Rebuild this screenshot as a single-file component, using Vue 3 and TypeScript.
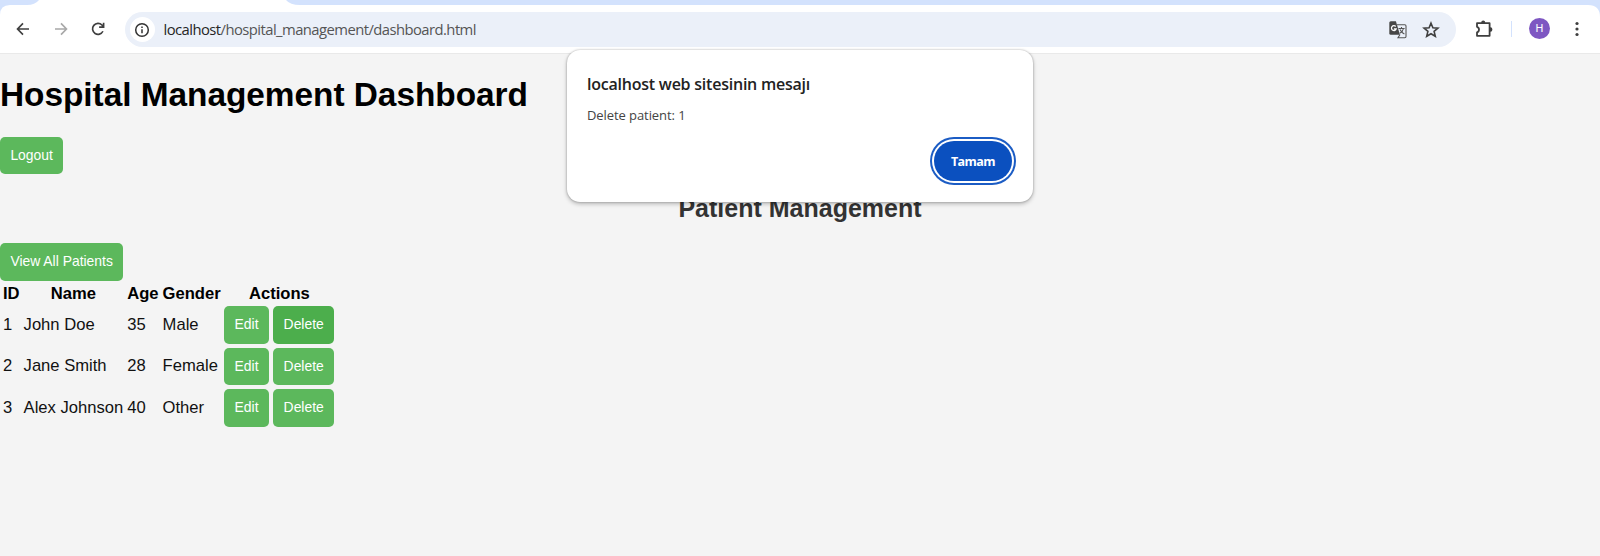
<script setup lang="ts">
interface Patient { id: number; name: string; age: number; gender: string }
const patients: Patient[] = [
  { id: 1, name: 'John Doe', age: 35, gender: 'Male' },
  { id: 2, name: 'Jane Smith', age: 28, gender: 'Female' },
  { id: 3, name: 'Alex Johnson', age: 40, gender: 'Other' },
]
const activeRow = 1
</script>

<template>
  <div class="window">
    <div class="tabstrip">
      <svg width="1600" height="20" viewBox="0 0 1600 20">
        <path d="M0 0H39Q35 5 27 5H10Q0 5 0 15Z" fill="#d3e2fd" />
        <path d="M286 0Q290 5 300 5H1588Q1600 5 1600 17V0Z" fill="#d3e2fd" />
      </svg>
    </div>
    <div class="toolbar">
      <svg class="nav" viewBox="0 0 24 24"><path d="M20 12H5M12 4.5L4.700 12l7.300 7.500" /></svg>
      <svg class="nav muted" viewBox="0 0 24 24"><path d="M4 12H19M12 4.5l7.300 7.500-7.300 7.500" /></svg>
      <svg class="nav" viewBox="0 0 24 24"><path d="M18.6 15a7.300 7.300 0 1 1-1.300-8.300l2 2.500M19.500 3.500v6h-6" /></svg>
      <div class="omnibox">
        <span class="info"><svg viewBox="0 0 16 16"><circle cx="8" cy="8" r="6.3" /><path d="M8 7.2v4M8 4.4v1.7" /></svg></span>
        <span class="url"><span class="host">localhost</span>/hospital_management/dashboard.html</span>
        <svg class="translate" viewBox="0 0 18 18">
          <path d="M8 3.8H15.8Q17 3.8 17 5V15.6Q17 16.8 15.8 16.8H9L11 13.5M9.5 7.5H15.6M12.5 6V7.5M14.5 7.5Q13.7 11 10.7 12.3M11 8.5Q12.5 11.5 15.4 13" fill="none" stroke="#555" stroke-width="1.1" />
          <path d="M1.800.3H6.900L10.900 13.700H1.800Q.3 13.700.3 12.200V1.800Q.3.3 1.800.3Z" fill="#474747" />
          <path d="M6.700 5.500A2.400 2.400 0 1 0 7.200 7.800H4.900" fill="none" stroke="#fff" stroke-width="1.3" />
        </svg>
        <svg class="star" viewBox="0 0 18 18"><path d="M9 2.200l1.900 4.600 5 .4-3.800 3.200 1.200 4.900L9 12.700l-4.300 2.600 1.200-4.900L2.100 7.200l5-.4z" /></svg>
      </div>
      <svg class="puzzle" viewBox="0 0 20 20">
        <path d="M3 4.200H15.600V16.800H3V13.400Q5 12.900 5 10.600T3 7.800Z" fill="none" stroke="#3f3f3f" stroke-width="1.8" stroke-linejoin="round" />
        <path d="M7.200 4V3.600a2 2 0 0 1 4 0V4ZM15.800 8.300h.6a2 2.200 0 0 1 0 4.400H15.800Z" fill="#3f3f3f" />
      </svg>
      <span class="divider"></span>
      <span class="avatar">H</span>
      <svg class="dots" viewBox="0 0 4 16"><circle cx="2" cy="2.500" r="1.6" /><circle cx="2" cy="8" r="1.6" /><circle cx="2" cy="13.500" r="1.6" /></svg>
    </div>

    <main class="page">
      <h1>Hospital Management Dashboard</h1>
      <button>Logout</button>
      <h2>Patient Management</h2>
      <button>View All Patients</button>
      <table>
        <thead><tr><th>ID</th><th>Name</th><th>Age</th><th>Gender</th><th>Actions</th></tr></thead>
        <tbody>
          <tr v-for="p in patients" :key="p.id">
            <td>{{ p.id }}</td><td>{{ p.name }}</td><td>{{ p.age }}</td><td>{{ p.gender }}</td>
            <td><div class="actions"><button>Edit</button><button :class="{ hover: p.id === activeRow }">Delete</button></div></td>
          </tr>
        </tbody>
      </table>
    </main>

    <div class="dialog" role="alertdialog">
      <div class="title">localhost web sitesinin mesajı</div>
      <div class="message">Delete patient: 1</div>
      <button class="ok">Tamam</button>
    </div>
  </div>
</template>

<style>
html, body { margin: 0; background: #f4f4f4; overflow: hidden; }
</style>

<style scoped>
* { box-sizing: border-box; }
.window { position: relative; width: 1600px; height: 556px; overflow: hidden; background: #f4f4f4; font-family: "Liberation Sans", Arial, sans-serif; }
.tabstrip { height: 12px; background: #fff; }
.tabstrip svg { display: block; position: absolute; }
.toolbar { height: 42px; display: flex; align-items: flex-start; background: #fff; border-bottom: 1px solid #e9e9e9; padding-left: 14px; }
.nav { flex: none; width: 18px; height: 18px; margin: 8px 19.5px 0 0; fill: none; stroke: #3f3f3f; stroke-width: 2.2; }
.nav.muted { stroke: #a8a8a8; }
.omnibox { flex: none; width: 1331px; height: 35px; border-radius: 18px; background: #ebf0f9; margin-left: -2px; display: flex; align-items: center; padding-left: 5px; }
.info { width: 25px; height: 25px; border-radius: 50%; background: #fff; display: grid; place-items: center; }
.info svg { width: 16px; height: 16px; fill: none; stroke: #333; stroke-width: 1.5; }
.url { margin: -1px 0 0 9px; font: 14.8px/20px "Open Sans", sans-serif; letter-spacing: -0.55px; color: #555; }
.host { color: #262626; }
.translate { width: 18px; height: 18px; margin-left: auto; }
.star { width: 18px; height: 18px; margin: 0 16px 0 15px; fill: none; stroke: #3f3f3f; stroke-width: 1.6; }
.puzzle { width: 20px; height: 20px; margin: 6.5px 0 0 18.5px; }
.divider { width: 1.5px; height: 16px; margin: 9px 0 0 16.5px; background: #d3e2fd; }
.avatar { width: 21px; height: 21px; margin: 6px 0 0 17px; border-radius: 50%; background: #7e57c2; color: #fff; font: 11px/21px Roboto, sans-serif; text-align: center; }
.dots { width: 4px; height: 16px; margin: 9px 0 0 25px; fill: #3f3f3f; }
.page { padding-top: 22px; font-size: 16.6px; color: #111; }
h1 { margin: 0; font-size: 33.4px; line-height: 38px; letter-spacing: -0.03px; color: #000; }
h2 { margin: 0; font-size: 25px; line-height: 28px; color: #333; text-align: center; }
.page > button { display: block; }
.page > h1 + button { margin: 22.5px 0 20px; }
.page > h2 + button { margin-top: 21px; }
.page button { height: 37.5px; padding: 0 10.4px 1px; border: 0; border-radius: 5px; background: #5cb85c; color: #fff; font: 13.9px "Liberation Sans", Arial, sans-serif; }
.page button.hover { background: #4cae4c; }
table { border-spacing: 2px; margin-top: -0.5px; }
th { padding: 2px 1px 0; color: #000; line-height: 19px; }
td { padding: 1px; }
td:last-child { padding-left: 0.5px; }
.actions { display: flex; gap: 4.3px; }
.dialog { position: absolute; left: 567px; top: 50px; width: 466px; height: 152px; padding: 23px 20px 0; border-radius: 13px; background: #fff; box-shadow: 0 0 2px rgba(0,0,0,.3), 0 2px 4px rgba(0,0,0,.25); font-family: "Open Sans", sans-serif; }
.title { font-size: 16px; line-height: 22px; font-weight: 600; letter-spacing: -0.23px; color: #222; }
.message { font-size: 13px; line-height: 20px; margin-top: 10px; letter-spacing: -0.08px; color: #444; }
.ok { position: absolute; right: 21px; bottom: 21px; width: 78px; height: 40px; padding: 0; border: 0; border-radius: 20px; background: #0b50bf; color: #fff; font: 700 12.5px "Open Sans", sans-serif; letter-spacing: -0.55px; box-shadow: 0 0 0 2px #fff, 0 0 0 4px #1b5cc4; }
</style>
